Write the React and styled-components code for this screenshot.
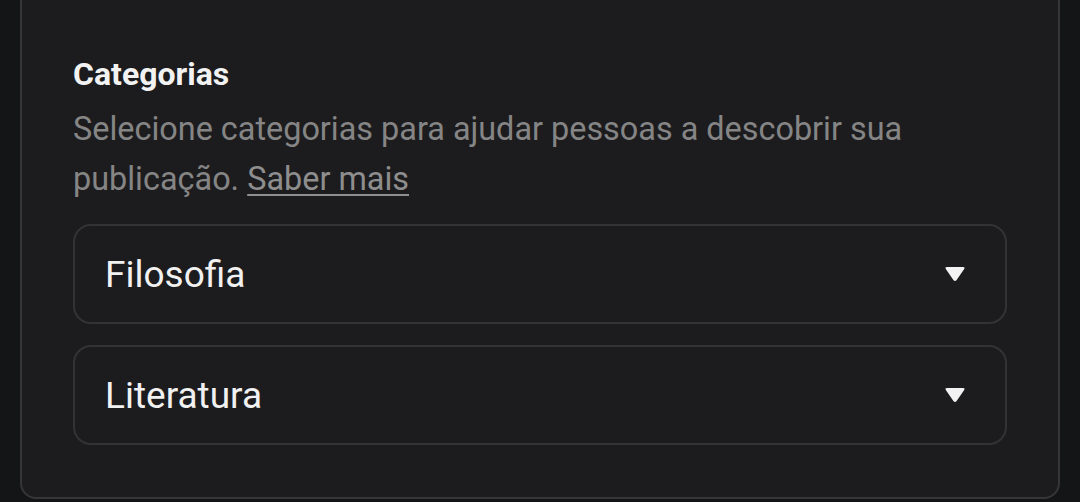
import styled, { createGlobalStyle } from 'styled-components';

const GlobalStyle = createGlobalStyle`
    html, body {
        margin: 0;
        padding: 0;
        background: #141517;
        font-family: Roboto, "Noto Sans", sans-serif;
    }
`;

const Page = styled.div`
    width: 1080px;
    height: 502px;
    overflow: hidden;
    box-sizing: border-box;
    padding: 0 20px 6px 20px;
`;

const Card = styled.section`
    margin-top: -20px;
    box-sizing: border-box;
    background: #1c1c1e;
    border: 2px solid #363638;
    border-radius: 16px;
    padding: 73px 51px 52px 51px;
    display: flex;
    flex-direction: column;
`;

const Title = styled.h2`
    margin: 0;
    font-size: 32px;
    font-weight: 700;
    line-height: 38px;
    color: #f2f2f2;
`;

const Description = styled.p`
    margin: 11px 0 20px 0;
    font-size: 32.4px;
    line-height: 50px;
    color: #858585;
`;

const Link = styled.a`
    color: #8e8e8e;
    text-decoration: underline;
    text-underline-offset: 4px;
    text-decoration-thickness: 2px;
`;

const List = styled.div`
    display: flex;
    flex-direction: column;
    gap: 21px;
`;

const Select = styled.div`
    height: 100px;
    box-sizing: border-box;
    border: 2px solid #333335;
    border-radius: 18px;
    display: flex;
    align-items: center;
    justify-content: space-between;
    padding: 0 39px 0 30px;
    color: #f1f1f1;
    font-size: 37px;
`;

const Caret = () => (
    <svg width="22" height="18" viewBox="0 0 22 18">
        <path d="M3 2 H19 Q21.5 2 20 4.2 L12.6 15 Q11 17 9.4 15 L2 4.2 Q0.5 2 3 2 Z" fill="#f2f2f2" />
    </svg>
);

const categories = ['Filosofia', 'Literatura'];

const App = () => (
    <>
        <GlobalStyle />
        <Page>
            <Card>
                <Title>Categorias</Title>
                <Description>
                    Selecione categorias para ajudar pessoas a descobrir sua publicação.{' '}
                    <Link>Saber mais</Link>
                </Description>
                <List>
                    {categories.map((c) => (
                        <Select key={c}>
                            <span>{c}</span>
                            <Caret />
                        </Select>
                    ))}
                </List>
            </Card>
        </Page>
    </>
);

export default App;
